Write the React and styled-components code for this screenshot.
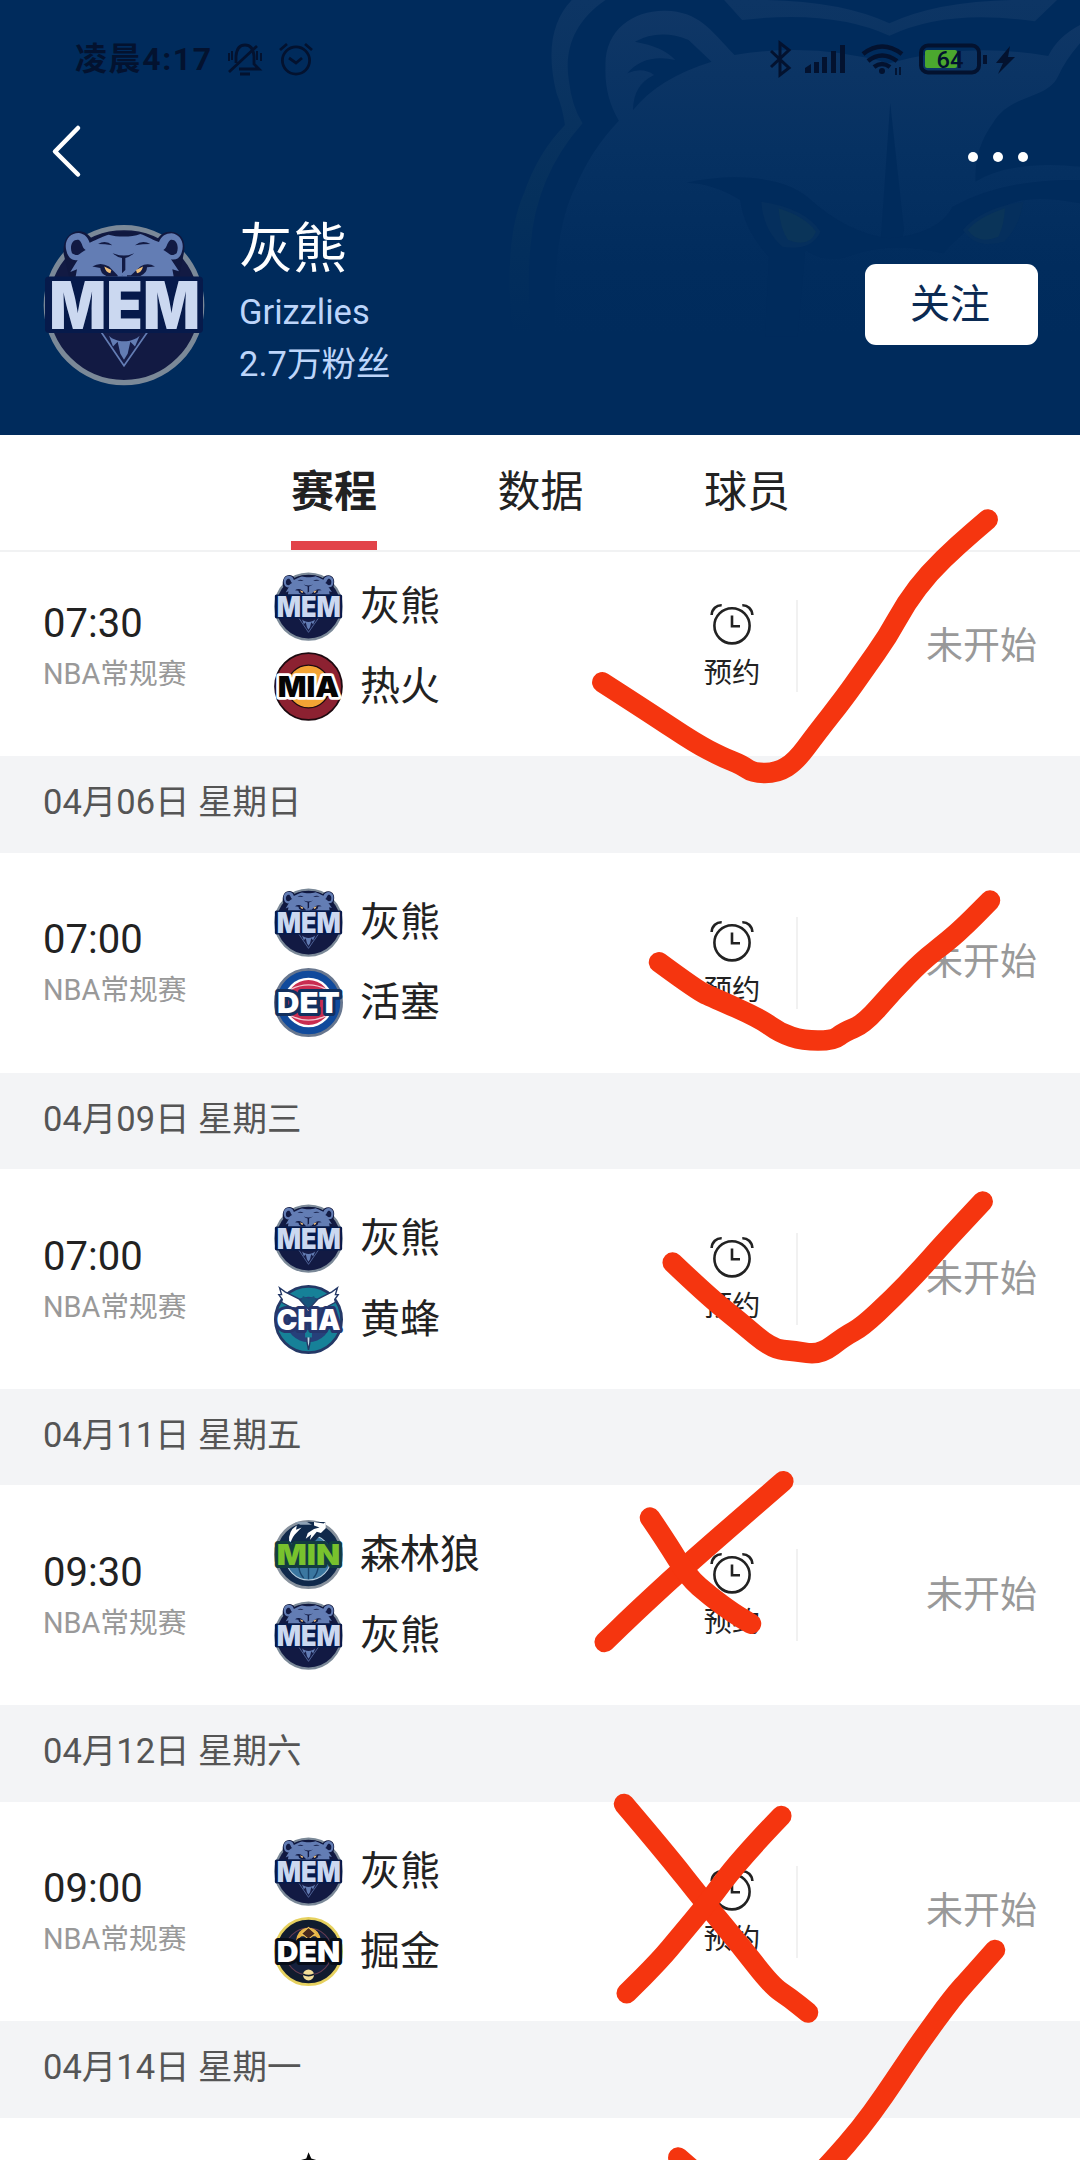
import styled, { createGlobalStyle, css } from 'styled-components';

const teams = {
  MEM: '灰熊',
  MIA: '热火',
  DET: '活塞',
  CHA: '黄蜂',
  MIN: '森林狼',
  DEN: '掘金',
};

const games = [
  { time: '07:30', away: 'MEM', home: 'MIA' },
  { date: '04月06日 星期日', time: '07:00', away: 'MEM', home: 'DET' },
  { date: '04月09日 星期三', time: '07:00', away: 'MEM', home: 'CHA' },
  { date: '04月11日 星期五', time: '09:30', away: 'MIN', home: 'MEM' },
  { date: '04月12日 星期六', time: '09:00', away: 'MEM', home: 'DEN' },
  { date: '04月14日 星期一', away: 'SAS' },
];

const marks = [
  [[602.3, 682.3], [650, 713], [695, 743], [722, 757], [742, 765], [753, 773], [777, 773], [796, 761], [816, 734], [845, 697], [864, 670], [888, 636], [906, 603], [929, 573], [958, 545], [987.7, 519.5]],
  [[659, 962.3], [698, 991], [712, 997], [760, 1018.5], [780, 1033], [803, 1040.6], [833, 1040.6], [844, 1032], [864, 1024], [893, 991], [922, 961], [948, 941], [967, 924], [990, 900.6]],
  [[672.7, 1262.6], [706.7, 1295], [740, 1322], [772, 1349], [795, 1351], [820, 1355], [845, 1336], [862, 1327], [893, 1298], [920, 1270], [943, 1244], [982.7, 1201.6]],
  [[783.3, 1481.3], [693.3, 1559], [636.7, 1611], [604.7, 1642]],
  [[650, 1517.6], [666, 1541], [688, 1577], [710, 1596], [733, 1613], [751, 1623.7]],
  [[624, 1804], [664, 1851], [706.7, 1905], [740, 1945], [772, 1986], [790, 1998], [808, 2012.5]],
  [[781.3, 1816], [740, 1859], [706.7, 1904], [680, 1936], [660, 1960], [626.7, 1993.3]],
  [[995, 1950], [972, 1976], [953, 1997], [921, 2041], [904, 2066], [884, 2096], [860, 2129], [833, 2160], [800, 2195]],
  [[678.3, 2157.5], [710, 2185]],
];

// Pen strokes bend through the midpoints, so the corners stay soft
const strokePath = (points) => {
  const last = points[points.length - 1];
  let d = `M${points[0]}`;
  for (let i = 1; i < points.length - 1; i++) {
    const [x, y] = points[i];
    const [nx, ny] = points[i + 1];
    d += ` Q${x} ${y} ${(x + nx) / 2} ${(y + ny) / 2}`;
  }
  return `${d} L${last}`;
};

// Letters that run across the middle of every team badge
function BadgeText({ children, fill, edge, width = 92, edgeWidth = 9 }) {
  return (
    <text
      x="50"
      y="65"
      textAnchor="middle"
      textLength={width}
      lengthAdjust="spacingAndGlyphs"
      fontFamily="Inter, 'Liberation Sans', sans-serif"
      fontWeight="900"
      fontSize="42"
      fill={fill}
      stroke={edge}
      strokeWidth={edgeWidth}
      strokeLinejoin="round"
      paintOrder="stroke"
    >
      {children}
    </text>
  );
}

function Grizzlies() {
  return (
    <svg viewBox="38 40 486 487" preserveAspectRatio="none">
      <circle cx="281" cy="284" r="233" fill="#121a43" stroke="#7b8998" strokeWidth="16" />
      <path
        d="M100 130C96 90 115 60 150 62C168 64 178 76 186 86C220 56 345 56 380 88C388 72 402 62 422 63C455 66 468 92 460 130L445 205H118Z"
        fill="#10183f"
      />
      <path
        d="M108 120C100 88 120 66 146 67C164 70 172 80 178 96C205 84 220 76 235 72C262 80 304 80 330 70C350 76 362 86 386 94C394 76 406 68 424 68C450 72 464 96 454 126C450 142 436 150 422 146L446 182L426 176L430 198H136L140 176L120 184L142 148C126 152 112 140 108 120Z"
        fill="#637db4"
      />
      <path d="M125 128C116 104 128 84 146 88C158 98 154 112 166 118C150 124 146 142 125 128Z" fill="#121a43" />
      <path d="M439 128C448 104 436 84 420 88C408 98 411 112 399 118C414 124 420 142 439 128Z" fill="#121a43" />
      <path
        d="M203 100Q226 86 246 104Q224 100 203 100ZM314 104Q336 86 360 100Q338 100 314 104ZM247 128Q282 142 312 128Q296 140 285 142V178L275 188V142Q260 140 247 128ZM186 168Q210 152 236 168L262 194L302 194L330 168Q352 154 374 168L350 170Q350 188 330 196H228Q210 188 210 172Z"
        fill="#121a43"
      />
      <path d="M222 168L243 178L240 188Q226 186 222 168ZM338 168L317 178L320 188Q334 186 338 168Z" fill="#f0bf78" />
      <path d="M262 190L276 194L290 190V204H262Z" fill="#637db4" />
      <path d="M212 364L281 466L352 364" fill="#161d48" stroke="#637db4" strokeWidth="5" />
      <path d="M236 376L248 408L262 394L270 430L281 448L292 430L300 394L314 408L328 376C306 398 256 398 236 376Z" fill="#637db4" />
      <rect x="44" y="198" width="474" height="170" rx="12" fill="#061a4b" />
      <text
        x="283"
        y="355"
        textAnchor="middle"
        textLength="452"
        lengthAdjust="spacingAndGlyphs"
        fontFamily="Inter, 'Liberation Sans', sans-serif"
        fontWeight="900"
        fontSize="198"
        fill="#cbd8f0"
      >
        MEM
      </text>
    </svg>
  );
}

function Heat() {
  return (
    <svg viewBox="0 0 100 100">
      <circle cx="50" cy="50" r="48.5" fill="#8c2131" stroke="#1d0a10" strokeWidth="2.5" />
      <circle cx="50" cy="50" r="31" fill="#f3a334" stroke="#1d0a10" strokeWidth="2" />
      <BadgeText fill="#050505" edge="#ffffff" width={89} edgeWidth={8}>MIA</BadgeText>
    </svg>
  );
}

function Pistons() {
  return (
    <svg viewBox="0 0 100 100">
      <circle cx="50" cy="50" r="48" fill="#104a9c" stroke="#68778f" strokeWidth="4" />
      <circle cx="50" cy="50" r="36" fill="#fff" />
      <circle cx="50" cy="50" r="32.5" fill="#c92c50" />
      <path d="M24 31Q50 18 76 31M24 69Q50 82 76 69" fill="none" stroke="#f3c7d2" strokeWidth="1.8" />
      <BadgeText fill="#fff" edge="#12305f" width={91}>DET</BadgeText>
    </svg>
  );
}

function Hornets() {
  return (
    <svg viewBox="0 0 100 100">
      <circle cx="50" cy="50" r="48" fill="#168198" stroke="#243866" strokeWidth="4" />
      <circle cx="50" cy="50" r="33" fill="#26407a" />
      <path d="M42 16L50 20L58 16L62 26L54 36H46L38 26Z" fill="#17537b" />
      <path
        d="M8 4L16 10L36 20L46 31L50 35L54 31L64 20L84 10L92 4L89 14L93 14L88 21L89 25L74 33L56 34L50 39L44 34L26 33L11 25L12 21L7 14L11 14Z"
        fill="#fff"
        stroke="#243866"
        strokeWidth="2"
      />
      <path d="M47 66H53L52 84L50 94L48 84Z" fill="#c9dce7" stroke="#243866" strokeWidth="2" />
      <path d="M45 65H55V76H45Z" fill="#168198" />
      <BadgeText fill="#fff" edge="#26366d" width={93}>CHA</BadgeText>
    </svg>
  );
}

function Timberwolves() {
  return (
    <svg viewBox="0 0 100 100">
      <circle cx="50" cy="50" r="48" fill="#10294b" stroke="#87919d" strokeWidth="4" />
      <circle cx="50" cy="54" r="33" fill="#3b77a0" stroke="#b8d0e0" strokeWidth="1.5" />
      <path d="M50 68V86M36 68Q37 78 43 84M64 68Q63 78 57 84" fill="none" stroke="#18436b" strokeWidth="2" />
      <path d="M22 34L27 14Q40 0 56 3L75 3L74 12L67 22L60 30L40 34Z" fill="#10294b" />
      <path d="M22 32Q20 16 33 8L32 14L40 11L33 18Q27 23 24 33Z" fill="#fff" />
      <path d="M58 3L72 5L75 2L75 12L68 19L62 17L52 29L54 21L46 27L49 19L58 13L66 11L58 8Z" fill="#fff" />
      <path d="M30 3H48L55 7H38Z" fill="#8fa2b5" />
      <BadgeText fill="#78c22d" edge="#123c40">MIN</BadgeText>
    </svg>
  );
}

function Nuggets() {
  return (
    <svg viewBox="0 0 100 100">
      <circle cx="50" cy="50" r="48" fill="#111c2e" stroke="#e6d15f" strokeWidth="4" />
      <circle cx="50" cy="50" r="34" fill="#14203c" stroke="#673b50" strokeWidth="1.5" />
      <path d="M32 34Q34 19 46 16H54Q66 19 68 34L60 28H40Z" fill="#e8b546" />
      <path d="M50 15L60 24L50 32L40 24Z" fill="#49291d" stroke="#f2c75b" strokeWidth="1.5" />
      <circle cx="50" cy="84" r="8" fill="#f3dd98" />
      <path d="M42 83Q50 87 58 83" fill="none" stroke="#111c2e" strokeWidth="2.5" />
      <BadgeText fill="#fff" edge="#070d18">DEN</BadgeText>
    </svg>
  );
}

function Spurs() {
  return (
    <svg viewBox="0 0 100 100">
      <path d="M50 0L54 9L66 14L96 50L50 100L4 50L34 14L46 9Z" fill="#b5bbbd" />
      <path d="M50 -1L54 8L64 11L50 16L36 11L47 8Z" fill="#080808" />
    </svg>
  );
}

const badges = {
  MEM: Grizzlies,
  MIA: Heat,
  DET: Pistons,
  CHA: Hornets,
  MIN: Timberwolves,
  DEN: Nuggets,
  SAS: Spurs,
};

function AlarmIcon() {
  return (
    <svg width="46" height="42" viewBox="0 0 46 42" fill="none" stroke="#222" strokeWidth="2.6">
      <circle cx="23" cy="22.8" r="17.6" />
      <path d="M23 12.5V23.3H31" />
      <path d="M2.6 12C3 6 7.5 2 12.7 2.2M43.4 12C43 6 38.5 2 33.3 2.2" />
    </svg>
  );
}

function HeaderBear() {
  return (
    <BearArt viewBox="0 0 1568 1305" preserveAspectRatio="none">
      <defs>
        <linearGradient id="bearFade" x1="0" y1="0" x2="0" y2="1000" gradientUnits="userSpaceOnUse">
          <stop offset="0" stopColor="#103766" />
          <stop offset="0.45" stopColor="#063162" />
          <stop offset="0.8" stopColor="#012c5d" />
          <stop offset="1" stopColor="#002b5c" />
        </linearGradient>
        <linearGradient id="lineFade" x1="0" y1="0" x2="0" y2="1000" gradientUnits="userSpaceOnUse">
          <stop offset="0" stopColor="#0d3564" />
          <stop offset="0.6" stopColor="#05305c" />
          <stop offset="1" stopColor="#002b5c" />
        </linearGradient>
      </defs>
      <g fill="url(#lineFade)">
        <path d="M240 0H328C245 65 220 150 232 240Q240 320 268 370Q145 530 132 740Q122 850 135 1000H85Q60 720 115 580Q150 460 222 375Q215 320 200 280C172 150 190 60 240 0Z" />
        <path d="M638 0H690Q930 -5 1070 70Q1210 -5 1450 0H1508L1450 64Q1220 25 1070 107Q920 28 685 60Z" />
      </g>
      <path
        d="M328 200C325 90 400 30 485 32C570 35 600 85 665 165Q870 125 1070 190Q1270 125 1485 168Q1510 110 1568 75V130Q1530 180 1510 230C1480 300 1385 280 1340 370Q1290 450 1295 545Q1390 480 1568 500V1050H195Q185 700 250 560Q290 450 363 362Q325 290 328 200Z"
        fill="url(#bearFade)"
      />
      <g fill="#002b5c">
        <path d="M405 125Q470 85 545 120L605 185Q465 235 400 330Q400 255 455 225Q425 200 385 220Q430 160 510 180Q480 140 405 125Z" />
        <path d="M1072 310L1108 690L1100 735L1048 710Z" />
        <path d="M540 548C650 520 785 525 855 590Q960 700 1070 715Q1200 700 1235 620Q1370 535 1568 540V610Q1430 580 1370 620Q1280 670 1210 760Q1070 720 960 770Q900 790 850 750L830 1010H745L755 770Q690 690 680 600Q610 550 540 548Z" />
      </g>
      <path d="M735 605Q850 625 890 695Q865 755 790 740Q740 690 735 605ZM1420 605Q1310 625 1262 690Q1295 750 1370 725Q1410 680 1420 605Z" fill="#052f5d" />
      <path d="M780 625Q850 650 878 695Q860 745 805 720Q785 690 780 625ZM1372 625Q1305 650 1275 690Q1300 735 1355 710Q1370 675 1372 625Z" fill="#0a3459" />
    </BearArt>
  );
}

function StatusIcons() {
  return (
    <svg width="250" height="40" viewBox="768 40 250 40" fill="none" stroke="#03122f" strokeWidth="3">
      <path d="M771 51L789 68L780 75V43L789 50L771 67" strokeWidth="3" />
      <path
        d="M805 68l6 -4v9h-6zM814 62h5v11h-5zM822 57h5v16h-5zM831 51h5v22h-5zM840 45h5v28h-5z"
        fill="#03122f"
        stroke="none"
      />
      <path d="M863 54Q882 39 902 54M868 61Q882 50 897 61M874 67Q882 61 890 67" strokeWidth="4.6" />
      <circle cx="882" cy="71" r="3" fill="#03122f" stroke="none" />
      <path d="M896 68V75M900 67V75" strokeWidth="1.8" />
      <rect x="925" y="50" width="32" height="18" rx="2" fill="#4ba82e" stroke="none" />
      <rect x="921" y="45.5" width="58" height="27" rx="7" strokeWidth="4" />
      <path d="M985 55V64" strokeWidth="4" />
      <text x="950" y="68" textAnchor="middle" textLength="27" lengthAdjust="spacingAndGlyphs" fontFamily="Roboto, sans-serif" fontWeight="500" fontSize="23" fill="#03122f" stroke="none">64</text>
      <path d="M1010 46L996 63H1003L998 74L1015 57H1008Z" fill="#03122f" stroke="none" />
    </svg>
  );
}

function Game({ time, away, home, cut }) {
  return (
    <GameRow $cut={cut}>
      <GameInfo>
        {time && <Time>{time}</Time>}
        {time && <League>NBA常规赛</League>}
      </GameInfo>
      <TeamList>
        {[away, home].filter(Boolean).map((code) => {
          const Badge = badges[code];
          return (
            <Team key={code}>
              <BadgeBox><Badge /></BadgeBox>
              {teams[code] && <Name>{teams[code]}</Name>}
            </Team>
          );
        })}
      </TeamList>
      {time && (
        <>
          <Remind>
            <AlarmIcon />
            预约
          </Remind>
          <Divider />
          <GameState>未开始</GameState>
        </>
      )}
    </GameRow>
  );
}

export default function App() {
  return (
    <>
      <GlobalStyle />
      <Page>
        <Header>
          <HeaderBear />
          <StatusBar>
            <Clock>
              <ClockText>凌晨4:17</ClockText>
              <svg width="90" height="40" viewBox="226 40 90 40" fill="none" stroke="#03122f" strokeWidth="2.8">
                <path d="M236 63V56Q237 45 245 45Q253 45 254 56V64L259 69H239M229 72L257 46M240 74H250" />
                <path d="M229 53V61M232 51V60M257 51V60M261 53V61" strokeWidth="2" />
                <circle cx="296" cy="60.5" r="13.6" />
                <path d="M289 58L296 63L302 58M280 50L287 44M305 44L312 50" />
              </svg>
            </Clock>
            <StatusIcons />
          </StatusBar>
          <NavBar>
            <svg width="34" height="54" viewBox="0 0 34 54" fill="none" stroke="#fff" strokeWidth="4.5" strokeLinecap="round" strokeLinejoin="round">
              <path d="M28 4L5 27.5L28 50.5" />
            </svg>
            <More><i /><i /><i /></More>
          </NavBar>
          <Profile>
            <BigBadge><Grizzlies /></BigBadge>
            <ProfileText>
              <TeamName>灰熊</TeamName>
              <Detail>Grizzlies</Detail>
              <Detail>2.7万粉丝</Detail>
            </ProfileText>
            <FollowButton>关注</FollowButton>
          </Profile>
        </Header>
        <Tabs>
          <Tab $active>赛程</Tab>
          <Tab>数据</Tab>
          <Tab>球员</Tab>
        </Tabs>
        <Schedule>
          {games.map((game, i) => (
            <div key={i}>
              {game.date && <DateBar>{game.date}</DateBar>}
              <Game {...game} cut={i === 0} />
            </div>
          ))}
        </Schedule>
        <Marks viewBox="0 0 1080 2160">
          {marks.map((points, i) => (
            <path key={i} d={strokePath(points)} />
          ))}
        </Marks>
      </Page>
    </>
  );
}

const GlobalStyle = createGlobalStyle`
  * {
    box-sizing: border-box;
  }
  body {
    margin: 0;
    background-color: #fff;
    font-family: Roboto, 'Noto Sans CJK SC', sans-serif;
    color: #222;
  }
  svg {
    display: block;
    overflow: visible;
  }
`;

const Page = styled.div`
  position: relative;
  display: flex;
  flex-direction: column;
  width: 1080px;
  height: 2160px;
  overflow: hidden;
`;

const Header = styled.header`
  position: relative;
  flex: none;
  height: 435px;
  background-color: #002b5c;
`;

const BearArt = styled.svg`
  position: absolute;
  top: 0;
  right: 0;
  width: 600px;
  height: 435px;
`;

const StatusBar = styled.div`
  position: relative;
  display: flex;
  justify-content: space-between;
  align-items: center;
  height: 120px;
  padding: 0 62px 0 75px;
`;

const Clock = styled.div`
  display: flex;
  align-items: center;
  gap: 13px;
  color: #03122f;
  font-size: 32px;
  font-weight: 700;
`;

const ClockText = styled.span`
  width: 138px;
  padding-bottom: 2px;
  letter-spacing: 1.6px;
  line-height: 44px;
  white-space: nowrap;
`;

const NavBar = styled.div`
  position: relative;
  display: flex;
  justify-content: space-between;
  height: 62px;
  padding: 4px 52px 0 50px;
`;

const More = styled.div`
  display: flex;
  gap: 15px;
  padding-top: 28px;

  i {
    width: 10px;
    height: 10px;
    border-radius: 50%;
    background-color: #fff;
  }
`;

const Profile = styled.div`
  position: relative;
  display: flex;
  align-items: center;
  height: 245px;
  padding: 0 42px 0 43px;
`;

const BigBadge = styled.div`
  width: 162px;

  svg {
    width: 162px;
    height: 162px;
  }
`;

const ProfileText = styled.div`
  flex: 1;
  padding: 0 0 3px 34px;
`;

const TeamName = styled.h1`
  margin: 0 0 3px;
  color: #fff;
  font-size: 54px;
  font-weight: 400;
  line-height: 66px;
`;

const Detail = styled.p`
  margin: 0;
  color: #bdd5fa;
  font-size: 34.5px;
  line-height: 52px;
`;

const FollowButton = styled.button`
  width: 173px;
  height: 81px;
  border: none;
  border-radius: 11px;
  background-color: #fff;
  color: #0b2a52;
  font-family: inherit;
  font-size: 40px;
  padding: 0 3px 8px 0;
`;

const Tabs = styled.nav`
  display: flex;
  flex: none;
  gap: 120.5px;
  height: 117px;
  padding-left: 291px;
  border-bottom: 2px solid #f1f2f3;
  background-color: #fff;
`;

const Tab = styled.div`
  height: 115px;
  padding-top: 25px;
  font-size: 43px;
  line-height: 64px;
  ${({ $active }) =>
    $active &&
    css`
      border-bottom: 9px solid #e2444a;
      font-weight: 700;
    `}
`;

const Schedule = styled.main`
  flex: 1;
  overflow: hidden;
`;

const DateBar = styled.div`
  height: 96.6px;
  padding-left: 43px;
  background-color: #f3f4f6;
  color: #555;
  font-size: 34.5px;
  line-height: 93px;
`;

const GameRow = styled.section`
  display: grid;
  grid-template-columns: 231px 398px 120px 2px 1fr;
  align-items: center;
  height: 219.7px;
  margin-top: ${({ $cut }) => ($cut ? '-15.4px' : '0')};
  padding: 0 43px;
`;

const GameInfo = styled.div`
  display: flex;
  flex-direction: column;
  gap: 6px;
  padding-top: 1px;
`;

const Time = styled.div`
  font-size: 40px;
  line-height: 48px;
`;

const League = styled.div`
  color: #999;
  font-size: 28.8px;
  line-height: 40px;
`;

const TeamList = styled.div`
  display: flex;
  flex-direction: column;
  align-self: start;
  gap: 11.5px;
  padding-top: 35px;
`;

const Team = styled.div`
  display: flex;
  align-items: center;
  gap: 17px;
  height: 69px;
`;

const Name = styled.span`
  padding-top: 1px;
  font-size: 40px;
  line-height: 60px;
`;

const BadgeBox = styled.span`
  width: 69px;
  height: 69px;

  svg {
    width: 69px;
    height: 69px;
  }
`;

const Remind = styled.div`
  display: flex;
  flex-direction: column;
  align-items: center;
  gap: 9px;
  width: 120px;
  padding-top: 5px;
  font-size: 28.3px;
  line-height: 40px;
`;

const Divider = styled.div`
  width: 2px;
  height: 92px;
  margin-left: 4px;
  background-color: #f1f1f1;
`;

const GameState = styled.div`
  padding-bottom: 7px;
  color: #999;
  font-size: 37px;
  text-align: right;
`;

const Marks = styled.svg`
  position: absolute;
  top: 0;
  left: 0;
  width: 1080px;
  height: 2160px;
  fill: none;
  stroke: #f5350f;
  stroke-width: 20.5;
  stroke-linecap: round;
  stroke-linejoin: round;
  pointer-events: none;
`;
